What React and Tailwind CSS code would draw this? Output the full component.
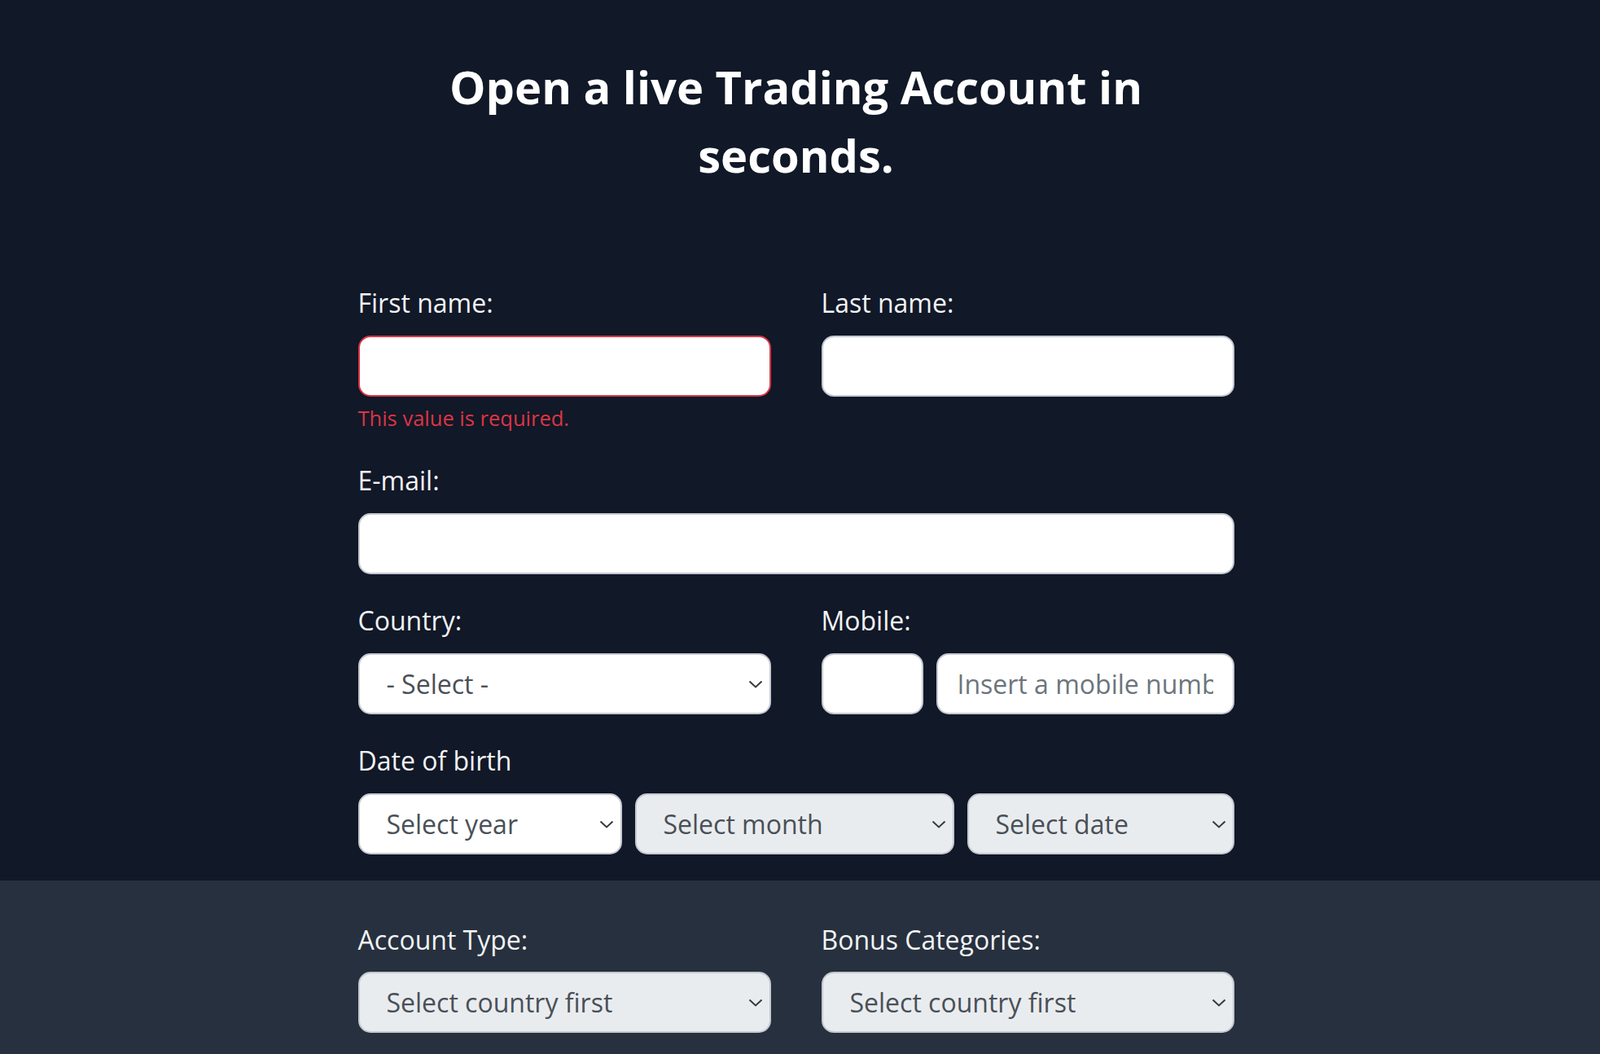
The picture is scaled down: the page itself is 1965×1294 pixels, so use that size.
import React from "react";

const Chevron = () => (
  <svg
    width="18"
    height="10"
    viewBox="0 0 18 10"
    fill="none"
    className="pointer-events-none absolute right-[10px] top-1/2 -translate-y-1/2"
  >
    <path d="M1.5 1.5L9 8.5L16.5 1.5" stroke="#343a40" strokeWidth="2" />
  </svg>
);

const Label = ({ children, mb = "mb-[17px]" }) => (
  <label className={`block text-[32px] leading-[46px] text-[#f1f3f5] ${mb}`}>
    {children}
  </label>
);

const Select = ({ value, muted, className = "" }) => (
  <div className={`relative ${className}`}>
    <select
      defaultValue={value}
      className={`w-full h-[75px] appearance-none rounded-[15px] border-2 border-[#c5c9d1] pl-[33px] pr-[40px] text-[32px] text-[#495057] outline-none ${
        muted ? "bg-[#e9ecef]" : "bg-white"
      }`}
    >
      <option>{value}</option>
    </select>
    <Chevron />
  </div>
);

const TextInput = ({ invalid, placeholder, className = "" }) => (
  <input
    type="text"
    placeholder={placeholder}
    className={`h-[75px] rounded-[15px] border-2 bg-white px-[24px] text-[32px] text-[#495057] placeholder:text-[#6c757d] outline-none ${
      invalid ? "border-[#dc3545]" : "border-[#c5c9d1]"
    } ${className}`}
  />
);

export default function App() {
  return (
    <main className="min-h-screen bg-[#111827] font-['Open_Sans',sans-serif]">
      <section className="pr-[10px] pt-[64px] pb-[32px]">
        <h1 className="mx-auto max-w-[900px] text-center text-[56px] font-bold leading-[84px] text-white">
          Open a live Trading Account in seconds.
        </h1>

        <form className="mx-auto mt-[117px] w-[1076px]">
          <div className="grid grid-cols-2 gap-x-[62px]">
            <div>
              <Label>First name:</Label>
              <TextInput invalid className="w-full" />
              <p className="mt-[8px] text-[25.5px] leading-[37px] text-[#dc3545]">
                This value is required.
              </p>
            </div>
            <div>
              <Label>Last name:</Label>
              <TextInput className="w-full" />
            </div>
          </div>

          <div className="mt-[35px]">
            <Label>E-mail:</Label>
            <TextInput className="w-full" />
          </div>

          <div className="mt-[34px] grid grid-cols-2 gap-x-[62px]">
            <div>
              <Label>Country:</Label>
              <Select value="- Select -" />
            </div>
            <div>
              <Label>Mobile:</Label>
              <div className="flex gap-[16px]">
                <TextInput className="w-[125px]" />
                <TextInput
                  placeholder="Insert a mobile number"
                  className="min-w-0 flex-1"
                />
              </div>
            </div>
          </div>

          <div className="mt-[34px]">
            <Label>Date of birth</Label>
            <div className="flex">
              <Select value="Select year" className="w-[324px]" />
              <Select value="Select month" muted className="ml-[16px] w-[392px]" />
              <Select value="Select date" muted className="ml-[16px] flex-1" />
            </div>
          </div>
        </form>
      </section>

      <section className="bg-[#27303e] pr-[10px] pt-[50px] pb-[60px]">
        <div className="mx-auto grid w-[1076px] grid-cols-2 gap-x-[62px]">
          <div>
            <Label mb="mb-[16px]">Account Type:</Label>
            <Select value="Select country first" muted />
          </div>
          <div>
            <Label mb="mb-[16px]">Bonus Categories:</Label>
            <Select value="Select country first" muted />
          </div>
        </div>
      </section>
    </main>
  );
}
